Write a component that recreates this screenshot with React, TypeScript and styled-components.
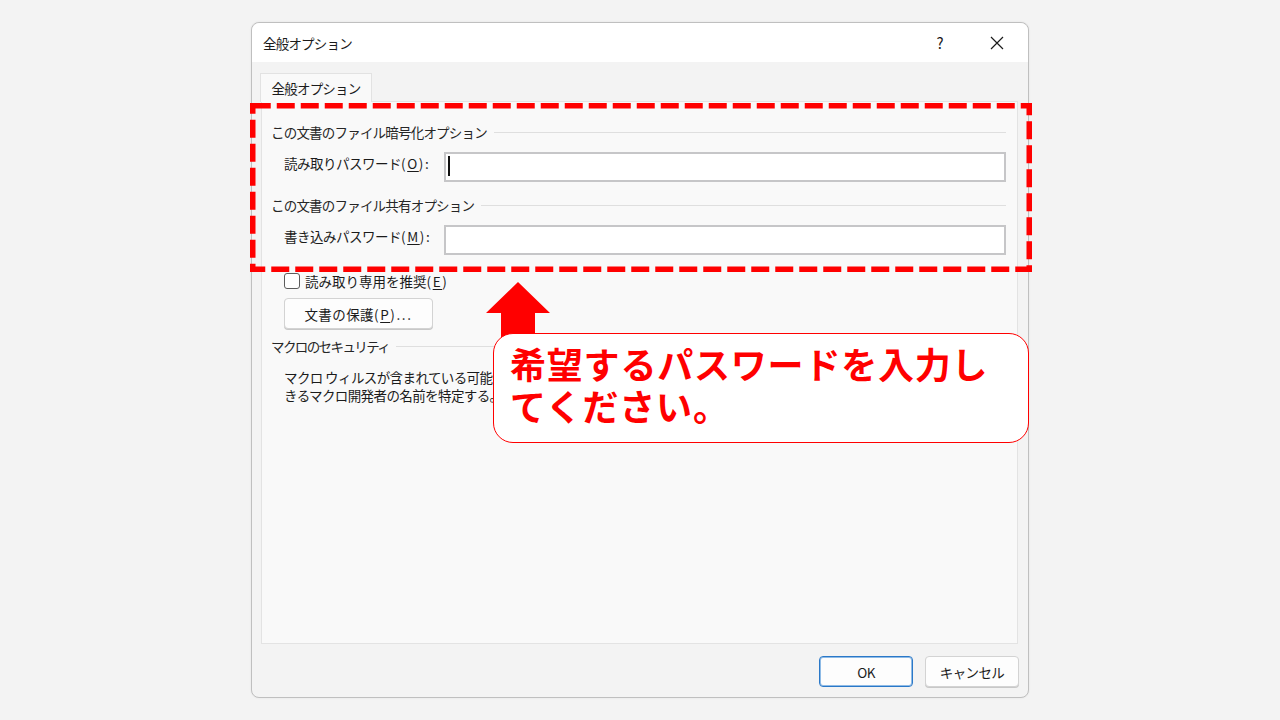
import React from "react";
import styled, { createGlobalStyle } from "styled-components";

const Global = createGlobalStyle`
  html, body { margin: 0; padding: 0; background: #f3f3f3; }
  body { font-family: "Noto Sans CJK JP", "Noto Sans", sans-serif; color: #1b1b1b; }
  * { box-sizing: border-box; }
`;

const Page = styled.div`
  width: 1280px;
  height: 720px;
  display: flex;
  align-items: center;
  justify-content: center;
`;

const Dialog = styled.div`
  position: relative;
  width: 778px;
  height: 676px;
  border: 1px solid #bfbfbf;
  border-radius: 8px;
  background: #f3f3f3;
  display: flex;
  flex-direction: column;
  box-shadow: 0 0 2px rgba(0, 0, 0, 0.08);
`;

const TitleBar = styled.div`
  height: 39px;
  flex: none;
  background: #ffffff;
  border-radius: 8px 8px 0 0;
  display: flex;
  align-items: center;
  padding-left: 11px;
  padding-right: 8px;
`;

const Title = styled.div`
  flex: 1;
  font-size: 13.5px;
  letter-spacing: -0.8px;
`;

const TitleButton = styled.div`
  width: 46px;
  height: 39px;
  display: flex;
  align-items: center;
  justify-content: center;
  font-size: 15px;
  color: #1b1b1b;
  & + & { margin-left: 11px; }
`;

const Body = styled.div`
  flex: 1;
  display: flex;
  flex-direction: column;
  padding: 11px 10px 0 8px;
  min-height: 0;
`;

const Tab = styled.div`
  width: 112px;
  height: 29px;
  flex: none;
  background: #f9f9f9;
  border: 1px solid #e2e2e2;
  border-bottom: none;
  display: flex;
  align-items: center;
  justify-content: center;
  font-size: 13.5px;
  letter-spacing: -0.8px;
  position: relative;
  z-index: 1;
`;

const Panel = styled.div`
  flex: 1;
  margin-left: 1px;
  margin-top: -1px;
  background: #f9f9f9;
  border: 1px solid #e3e3e3;
  padding: 21px 11px 0 9px;
  display: flex;
  flex-direction: column;
`;

const GroupHeader = styled.div<{ $mt?: number; $ls?: number }>`
  display: flex;
  align-items: center;
  height: 18px;
  margin-top: ${(p) => p.$mt ?? 0}px;
  font-size: 13.5px;
  letter-spacing: ${(p) => p.$ls ?? -0.8}px;
  color: #262626;
`;

const GroupLine = styled.div`
  flex: 1;
  height: 1px;
  background: #dfdfdf;
  margin-left: 7px;
`;

const FieldRow = styled.div<{ $mt: number }>`
  display: flex;
  align-items: flex-start;
  margin-top: ${(p) => p.$mt}px;
  padding-left: 13px;
`;

const FieldLabel = styled.div`
  width: 160px;
  line-height: 22px;
  font-size: 13.5px;
  letter-spacing: -0.5px;
`;

const Latin = styled.span`
  letter-spacing: 1.6px;
`;

const Mn = styled.span`
  text-decoration: underline;
  text-underline-offset: 2px;
`;

const TextBox = styled.div`
  flex: 1;
  height: 30px;
  background: #ffffff;
  border: 2px solid #c6c6c8;
  position: relative;
`;

const Caret = styled.span`
  position: absolute;
  left: 2px;
  top: 2px;
  width: 1.5px;
  height: 20px;
  background: #111;
`;

const CheckRow = styled.label`
  display: flex;
  align-items: center;
  gap: 5px;
  height: 18px;
  margin-top: 17px;
  padding-left: 13px;
  font-size: 13.5px;
  letter-spacing: 0px;
`;

const CheckBox = styled.span`
  width: 16px;
  height: 16px;
  border: 1px solid #5c5c5c;
  border-radius: 3px;
  background: #fff;
  flex: none;
`;

const PushButton = styled.div<{ $primary?: boolean; $w: number }>`
  width: ${(p) => p.$w}px;
  height: 31px;
  flex: none;
  display: flex;
  align-items: center;
  justify-content: center;
  border-radius: 4px;
  background: #fdfdfd;
  border: 1px solid ${(p) => (p.$primary ? "#2a78c8" : "#d3d3d3")};
  box-shadow: ${(p) => (p.$primary ? "inset 0 0 0 1px #8fbbe6" : "0 1px 0 #c8c8c8")};
  font-size: 13.5px;
  letter-spacing: -0.6px;
`;

const ProtectButton = styled(PushButton)`
  margin-top: 8px;
  margin-left: 13px;
  letter-spacing: 0.4px;
`;

const Paragraph = styled.div`
  margin-top: 13px;
  padding-left: 13px;
  font-size: 13.5px;
  letter-spacing: -0.6px;
  line-height: 18px;
  white-space: nowrap;
`;

const Footer = styled.div`
  flex: none;
  display: flex;
  justify-content: flex-end;
  gap: 12px;
  padding: 12px 9px 10px 0;
`;

const DashedFrame = styled.svg`
  position: absolute;
  left: -2px;
  top: 80px;
  width: 782px;
  height: 169px;
  pointer-events: none;
`;

const Arrow = styled.svg`
  position: absolute;
  left: 234px;
  top: 259px;
  width: 64px;
  height: 56px;
`;

const Callout = styled.div`
  position: absolute;
  left: 241px;
  top: 310px;
  width: 536px;
  height: 110px;
  background: #ffffff;
  border: 1px solid #ff0000;
  border-radius: 20px;
  padding: 8px 0 0 16px;
  color: #ff0000;
  font-weight: 700;
  font-size: 36px;
  letter-spacing: 0.8px;
  line-height: 42px;
`;

export default function App() {
  return (
    <Page>
      <Global />
      <Dialog>
        <TitleBar>
          <Title>全般オプション</Title>
          <TitleButton>?</TitleButton>
          <TitleButton>
            <svg width="16" height="16" viewBox="0 0 16 16">
              <path d="M2 2 L14 14 M14 2 L2 14" stroke="#1b1b1b" strokeWidth="1.2" fill="none" />
            </svg>
          </TitleButton>
        </TitleBar>
        <Body>
          <Tab>全般オプション</Tab>
          <Panel>
            <GroupHeader>
              この文書のファイル暗号化オプション
              <GroupLine />
            </GroupHeader>
            <FieldRow $mt={11}>
              <FieldLabel>
                読み取りパスワード<Latin>(<Mn>O</Mn>):</Latin>
              </FieldLabel>
              <TextBox>
                <Caret />
              </TextBox>
            </FieldRow>
            <GroupHeader $mt={14}>
              この文書のファイル共有オプション
              <GroupLine />
            </GroupHeader>
            <FieldRow $mt={11}>
              <FieldLabel>
                書き込みパスワード<Latin>(<Mn>M</Mn>):</Latin>
              </FieldLabel>
              <TextBox />
            </FieldRow>
            <CheckRow>
              <CheckBox />
              <span>
                読み取り専用を推奨<Latin>(<Mn>E</Mn>)</Latin>
              </span>
            </CheckRow>
            <ProtectButton $w={149}>
              文書の保護<Latin>(<Mn>P</Mn>)...</Latin>
            </ProtectButton>
            <GroupHeader $mt={8} $ls={-1.6}>
              マクロのセキュリティ
              <GroupLine />
            </GroupHeader>
            <Paragraph>
              マクロ ウィルスが含まれている可能性のあるファイルを開くときのセキュリティ レベルを調整し、信頼で
              <br />
              きるマクロ開発者の名前を特定する。
            </Paragraph>
          </Panel>
        </Body>
        <Footer>
          <PushButton $primary $w={94}>OK</PushButton>
          <PushButton $w={94}>キャンセル</PushButton>
        </Footer>

        <DashedFrame viewBox="0 0 782 169">
          <rect
            x="2.75"
            y="2.75"
            width="776.5"
            height="163.5"
            fill="none"
            stroke="#ff0000"
            strokeWidth="5.5"
            strokeDasharray="18 6"
          />
        </DashedFrame>
        <Arrow viewBox="0 0 64 56">
          <polygon points="32,0 64,31 49,31 49,56 15,56 15,31 0,31" fill="#ff0000" />
        </Arrow>
        <Callout>
          希望するパスワードを入力し
          <br />
          てください。
        </Callout>
      </Dialog>
    </Page>
  );
}
